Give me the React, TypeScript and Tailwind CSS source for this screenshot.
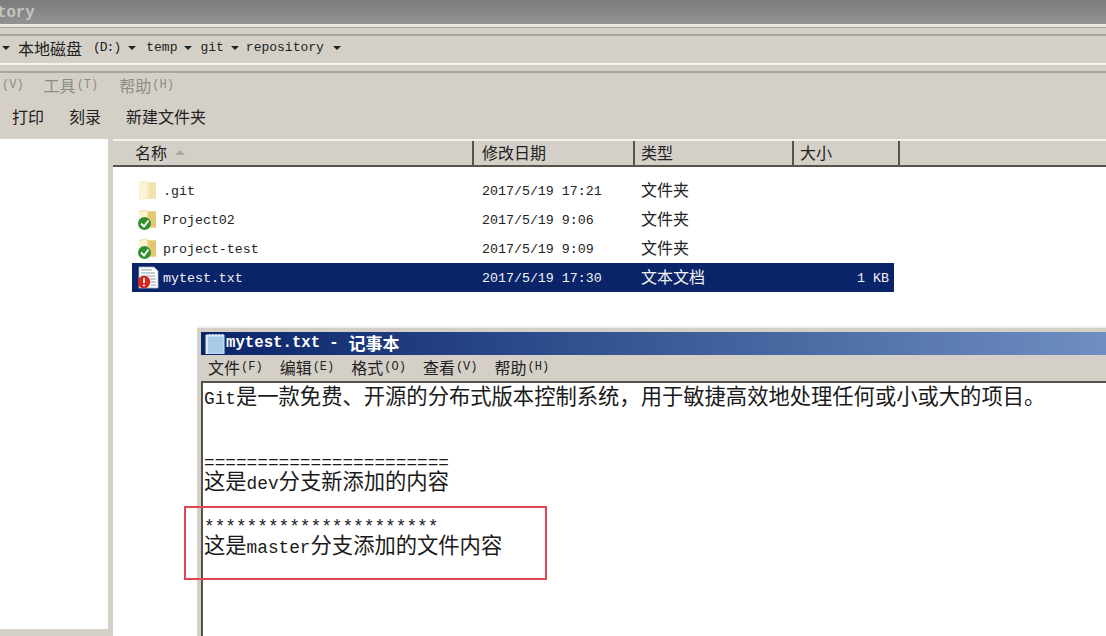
import React from "react";

const cjk = '"Noto Sans CJK SC", sans-serif';

const Folder = ({ check }: { check?: boolean }) => (
  <svg width="22" height="22" viewBox="0 0 22 22" className="shrink-0">
    <path d="M1 2l7-1.5 2 1.5h8v17H1z" fill={check ? "#ecd68c" : "#f5e9bd"} />
    <path d="M1 3l8-2v17l-8 2z" fill="#fbf3d2" />
    <path d="M11 3h7v15h-7z" fill={check ? "#e3c874" : "#efe2ae"} />
    {check && (
      <>
        <circle cx="6.5" cy="14.5" r="6.5" fill="#2f8f2c" />
        <path d="M3 14.5l3 3 4.5-6" fill="none" stroke="#ffffff" strokeWidth="2" />
      </>
    )}
  </svg>
);

const TextFile = () => (
  <svg width="22" height="24" viewBox="0 0 22 24" className="shrink-0">
    <path d="M1 1h15l4 4v17H1z" fill="#ffffff" stroke="#aab6c8" strokeWidth="0.8" />
    <path d="M3 4h11M3 7h14M3 10h14M12 13h6M13 16h5M13 19h5" stroke="#8f97a8" strokeWidth="1" />
    <circle cx="6" cy="16" r="6.3" fill="#d8261c" />
    <path d="M6 12v5M6 18.5v1.8" stroke="#ffffff" strokeWidth="1.8" />
  </svg>
);

const NoteIcon = () => (
  <svg width="20" height="20" viewBox="0 0 20 20" className="shrink-0">
    <path d="M1 1h18v19H1z" fill="#a9cbe8" stroke="#d9e8f5" strokeWidth="1" />
    <path d="M2 1v19M5 0v3M8 0v3M11 0v3M14 0v3M17 0v3" stroke="#ffffff" strokeWidth="1" />
  </svg>
);

const Arrow = ({ className }: { className: string }) => (
  <span className={`border-x-[4px] border-t-[4px] border-x-transparent border-t-[#222] shrink-0 ${className}`} />
);

const Mono = ({ children, className = "" }: { children: React.ReactNode; className?: string }) => (
  <span className={`font-['Liberation_Mono',monospace] ${className}`}>{children}</span>
);

const rows = [
  { name: ".git", date: "2017/5/19 17:21", type: "文件夹", size: "", icon: <Folder /> },
  { name: "Project02", date: "2017/5/19 9:06", type: "文件夹", size: "", icon: <Folder check /> },
  { name: "project-test", date: "2017/5/19 9:09", type: "文件夹", size: "", icon: <Folder check /> },
  { name: "mytest.txt", date: "2017/5/19 17:30", type: "文本文档", size: "1 KB", icon: <TextFile />, selected: true },
];

const columns = [
  { label: "名称", width: "w-[361px]", pad: "pl-[22px]" },
  { label: "修改日期", width: "w-[161px]", pad: "pl-[8px]" },
  { label: "类型", width: "w-[159px]", pad: "pl-[6px]" },
  { label: "大小", width: "w-[106px]", pad: "pl-[6px]" },
];

const noteMenu = [
  ["文件", "(F)"],
  ["编辑", "(E)"],
  ["格式", "(O)"],
  ["查看", "(V)"],
  ["帮助", "(H)"],
];

const Line = ({ children }: { children?: React.ReactNode }) => (
  <div className="h-[21.3px] leading-[21.3px] whitespace-nowrap">{children}</div>
);

const Half = ({ children }: { children: React.ReactNode }) => (
  <Mono className="text-[17.75px]">{children}</Mono>
);

export default function App() {
  return (
    <div
      className="relative h-[636px] w-[1106px] overflow-hidden bg-[#d4d0c8] flex flex-col text-[#222]"
      style={{ fontFamily: cjk }}
    >
      <div className="h-6 bg-gradient-to-b from-[#7b7b7b] to-[#939393] overflow-hidden">
        <Mono className="block -ml-[3px] mt-[5px] text-[15.7px] leading-4 font-bold text-[#c4c4c0]">tory</Mono>
      </div>
      <div className="h-[4px] bg-[#e9e7e1] border-b border-[#a5a29b]" />
      <div className="h-[6px]" />
      <div className="h-[29px] border-t-2 border-[#a8a59e] flex items-center text-[16px] pb-[4px]">
        <Arrow className="ml-[2px]" />
        <span className="ml-[8px]">本地磁盘</span>
        <Mono className="ml-[11px] text-[13px] tracking-[-1px]">(D:)</Mono>
        <Arrow className="ml-[8px]" />
        <Mono className="ml-[10px] text-[13px]">temp</Mono>
        <Arrow className="ml-[7px]" />
        <Mono className="ml-[8px] text-[13px]">git</Mono>
        <Arrow className="ml-[7px]" />
        <Mono className="ml-[7px] text-[13px]">repository</Mono>
        <Arrow className="ml-[9px]" />
      </div>
      <div className="h-[2px] bg-[#f4f2ee]" />
      <div className="h-[6px]" />
      <div className="h-[2px] bg-[#a8a59e]" />
      <div className="h-[28px] flex items-center text-[16px] text-[#8c8b86] pb-[4px]">
        <Mono className="ml-[2px] text-[12px]">(V)</Mono>
        <span className="ml-[20px]">工具</span>
        <Mono className="ml-[1px] text-[12px]">(T)</Mono>
        <span className="ml-[21px]">帮助</span>
        <Mono className="ml-[1px] text-[12px]">(H)</Mono>
      </div>
      <div className="h-[38px] flex items-center text-[16px] gap-[25px] pl-[12px] pb-[8px]">
        <span>打印</span>
        <span>刻录</span>
        <span>新建文件夹</span>
      </div>
      <div className="flex-1 flex min-h-0">
        <div className="w-[108px] flex flex-col">
          <div className="h-[490px] bg-white" />
        </div>
        <div className="w-[5px]" />
        <div className="flex-1 bg-white flex flex-col">
          <div className="h-[28px] bg-[#d4d0c8] border-t-2 border-[#f4f2ee] border-b-2 border-b-[#55534e] flex text-[16px]">
            {columns.map((c) => (
              <div key={c.label} className={`${c.width} ${c.pad} flex items-center gap-[8px] border-r-2 border-[#55534e] pb-[2px]`}>
                {c.label}
                {c.label === "名称" && (
                  <span className="border-x-[5px] border-b-[5px] border-x-transparent border-b-[#a9a79f]" />
                )}
              </div>
            ))}
          </div>
          <div className="pt-[9px] pl-[19px] w-[781px]">
            {rows.map((r) => (
              <div
                key={r.name}
                className={`h-[29px] flex items-center ${r.selected ? "bg-[#0a246a] text-[#f2f2f2]" : ""}`}
              >
                <div className="w-[31px] flex justify-center shrink-0 pl-[2px]">{r.icon}</div>
                <Mono className="w-[319px] text-[13.3px] pt-[2px]">{r.name}</Mono>
                <Mono className="w-[159px] text-[13.3px] pt-[2px]">{r.date}</Mono>
                <span className="w-[205px] text-[16px] -mt-[4px]">{r.type}</span>
                <Mono className="w-[43px] text-right text-[13.3px] pt-[2px]">{r.size}</Mono>
              </div>
            ))}
          </div>
        </div>
      </div>

      {/* notepad window on top of the explorer */}
      <div className="absolute left-[197px] top-[326px] right-0 bottom-0 bg-[#d4d0c8] border-t-2 border-t-[#efeee9] pt-[4px] pl-[4px] flex flex-col">
        <div className="h-[23px] bg-gradient-to-r from-[#0a246a] to-[#6f8fc2] flex items-center text-white font-bold pl-[4px] whitespace-nowrap">
          <NoteIcon />
          <Mono className="ml-[1px] text-[15.7px]">mytest.txt</Mono>
          <Mono className="ml-[9px] text-[15.7px]">-</Mono>
          <span className="ml-[10px] text-[17px] -mt-[2px]">记事本</span>
        </div>
        <div className="h-[26px] flex items-center text-[16px] pl-[7px] gap-[17px] whitespace-nowrap pb-[3px]">
          {noteMenu.map(([a, b]) => (
            <span key={a} className="flex items-center">
              {a}
              <Mono className="ml-[1px] text-[12px]">{b}</Mono>
            </span>
          ))}
        </div>
        <div className="flex-1 bg-white border-t-2 border-l-2 border-[#55534e] pt-[1px] pl-[1px] text-[21.3px] text-[#1a1a1a]">
          <Line>
            <Half>Git</Half>是一款免费、开源的分布式版本控制系统{"\uFF0C"}用于敏捷高效地处理任何或小或大的项目。
          </Line>
          <Line />
          <Line />
          <Line>
            <Half>=======================</Half>
          </Line>
          <Line>
            这是<Half>dev</Half>分支新添加的内容
          </Line>
          <Line />
          <Line>
            <Half>**********************</Half>
          </Line>
          <Line>
            这是<Half>master</Half>分支添加的文件内容
          </Line>
        </div>
      </div>

      {/* red highlight drawn over the screenshot */}
      <div className="absolute left-[184px] top-[506px] w-[363px] h-[74px] border-2 border-[#e64452]" />
    </div>
  );
}
